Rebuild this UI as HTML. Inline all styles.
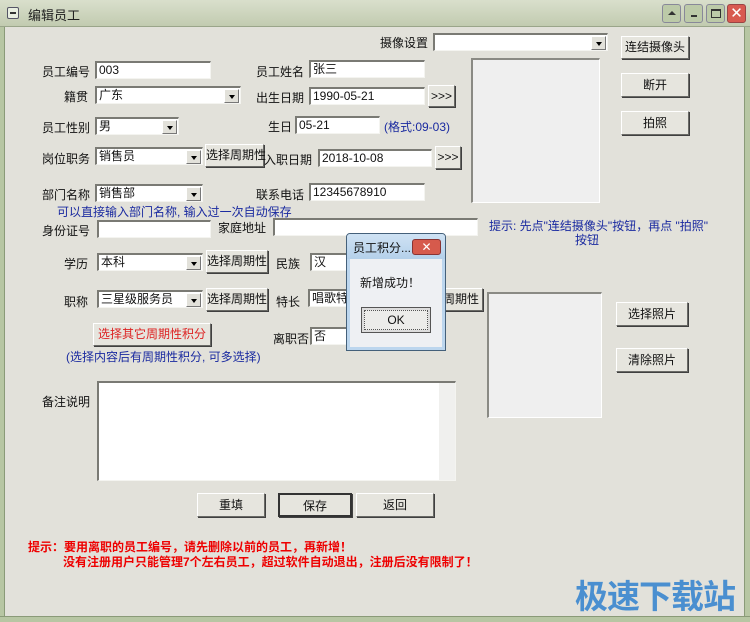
<!DOCTYPE html>
<html><head><meta charset="utf-8"><style>
*{margin:0;padding:0;box-sizing:border-box}
body{width:750px;height:622px;position:relative;overflow:hidden;background:#e2e1da;font-family:"Liberation Sans","Noto Sans CJK SC","WenQuanYi Zen Hei",sans-serif;font-size:12px;color:#111}
.a{position:absolute;white-space:nowrap}
.in{position:absolute;background:#fff;border-top:2px solid #7a7a74;border-left:2px solid #7a7a74;border-right:1px solid #f4f4f0;border-bottom:1px solid #f4f4f0;font-size:12px;line-height:14px;padding-left:2px;white-space:nowrap;overflow:hidden}
.dd{position:absolute;right:1px;top:1px;width:15px;height:14px;background:#e2e1da;border:1px solid;border-color:#fff #777 #777 #fff}
.dd:after{content:"";position:absolute;left:4px;top:5px;border:3px solid transparent;border-top:4px solid #000}
.b{position:absolute;background:#e6e5de;border:1px solid;border-color:#fff #6a6a66 #6a6a66 #fff;box-shadow:1px 1px 0 #404040;text-align:center;font-size:12px;white-space:nowrap}
.blue{color:#1a2aa0}
.red{color:#e00;font-weight:bold}
</style></head><body>
<!-- frame -->
<div class="a" style="left:0;top:0;width:750px;height:27px;background:linear-gradient(#d9dfcc,#c2cbb0);border-bottom:1px solid #9aa58a"></div>
<div class="a" style="left:0;top:27px;width:5px;height:595px;background:#b7c6a3;border-right:1px solid #8a9a78"></div>
<div class="a" style="left:744px;top:27px;width:6px;height:595px;background:#b7c6a3;border-left:1px solid #8a9a78"></div>
<div class="a" style="left:0;top:616px;width:750px;height:6px;background:#b7c6a3;border-top:1px solid #8a9a78"></div>
<div class="a" style="left:7px;top:7px;width:12px;height:12px;border:1px solid #556;background:#e8eee0;border-radius:2px"><div style="margin:4px 2px;height:2px;background:#333"></div></div>
<div class="a" style="left:28px;top:5px;font-size:13px;color:#222">编辑员工</div>
<div class="a" style="left:662px;top:4px;width:19px;height:19px;border-radius:3px;background:#bccaa8;border:1px solid #889">
<div style="margin:6px 5px;border:4px solid transparent;border-bottom:4px solid #333;width:0;height:0;margin-top:2px"></div></div>
<div class="a" style="left:684px;top:4px;width:19px;height:19px;border-radius:3px;background:#bccaa8;border:1px solid #889"><div style="margin:10px 6px 0;width:6px;height:2px;background:#333"></div></div>
<div class="a" style="left:706px;top:4px;width:19px;height:19px;border-radius:3px;background:#bccaa8;border:1px solid #889"><div style="margin:4px;width:10px;height:9px;border:1px solid #333;border-top-width:2px"></div></div>
<div class="a" style="left:727px;top:4px;width:19px;height:19px;border-radius:3px;background:#d85a50;border:1px solid #944;color:#fff;font-size:15px;line-height:17px;text-align:center">✕</div>

<!-- camera -->
<div class="a" style="left:380px;top:34px">摄像设置</div>
<div class="in" style="left:433px;top:33px;width:175px;height:18px"><div class="dd"></div></div>
<div class="b" style="left:621px;top:36px;width:68px;height:23px;line-height:21px">连结摄像头</div>
<div class="b" style="left:621px;top:73px;width:68px;height:24px;line-height:22px">断开</div>
<div class="b" style="left:621px;top:111px;width:68px;height:24px;line-height:22px">拍照</div>
<div class="a" style="left:471px;top:58px;width:129px;height:145px;background:#efefef;border-top:2px solid #8a8a84;border-left:2px solid #8a8a84;border-right:1px solid #fff;border-bottom:1px solid #fff"></div>

<div class="a" style="left:42px;top:63px">员工编号</div>
<div class="in" style="left:95px;top:61px;width:116px;height:18px">003</div>
<div class="a" style="left:256px;top:63px">员工姓名</div>
<div class="in" style="left:309px;top:60px;width:116px;height:18px">张三</div>

<div class="a" style="left:64px;top:88px">籍贯</div>
<div class="in" style="left:95px;top:86px;width:146px;height:18px">广东<div class="dd"></div></div>
<div class="a" style="left:256px;top:89px">出生日期</div>
<div class="in" style="left:309px;top:87px;width:116px;height:18px">1990-05-21</div>
<div class="b" style="left:428px;top:85px;width:27px;height:22px;line-height:20px">&gt;&gt;&gt;</div>

<div class="a" style="left:42px;top:119px">员工性别</div>
<div class="in" style="left:95px;top:117px;width:84px;height:18px">男<div class="dd"></div></div>
<div class="a" style="left:268px;top:118px">生日</div>
<div class="in" style="left:295px;top:116px;width:85px;height:18px">05-21</div>
<div class="a blue" style="left:384px;top:118px">(格式:09-03)</div>

<div class="a" style="left:42px;top:150px">岗位职务</div>
<div class="in" style="left:95px;top:147px;width:108px;height:18px">销售员<div class="dd"></div></div>
<div class="b" style="left:205px;top:144px;width:59px;height:23px;line-height:21px">选择周期性</div>
<div class="a" style="left:264px;top:151px">入职日期</div>
<div class="in" style="left:318px;top:149px;width:114px;height:18px">2018-10-08</div>
<div class="b" style="left:435px;top:146px;width:26px;height:23px;line-height:21px">&gt;&gt;&gt;</div>

<div class="a" style="left:42px;top:186px">部门名称</div>
<div class="in" style="left:95px;top:184px;width:108px;height:18px">销售部<div class="dd"></div></div>
<div class="a" style="left:256px;top:186px">联系电话</div>
<div class="in" style="left:309px;top:183px;width:116px;height:18px">12345678910</div>
<div class="a blue" style="left:57px;top:203px">可以直接输入部门名称, 输入过一次自动保存</div>

<div class="a" style="left:42px;top:222px">身份证号</div>
<div class="in" style="left:97px;top:220px;width:114px;height:18px"></div>
<div class="a" style="left:218px;top:219px">家庭地址</div>
<div class="in" style="left:273px;top:218px;width:205px;height:18px"></div>
<div class="a blue" style="left:489px;top:217px">提示: 先点"连结摄像头"按钮，再点 "拍照"</div>
<div class="a blue" style="left:575px;top:231px">按钮</div>

<div class="a" style="left:64px;top:255px">学历</div>
<div class="in" style="left:97px;top:253px;width:106px;height:18px">本科<div class="dd"></div></div>
<div class="b" style="left:206px;top:250px;width:62px;height:23px;line-height:21px">选择周期性</div>
<div class="a" style="left:276px;top:255px">民族</div>
<div class="in" style="left:310px;top:253px;width:60px;height:18px">汉</div>

<div class="a" style="left:64px;top:293px">职称</div>
<div class="in" style="left:97px;top:290px;width:106px;height:18px">三星级服务员<div class="dd"></div></div>
<div class="b" style="left:206px;top:288px;width:62px;height:23px;line-height:21px">选择周期性</div>
<div class="a" style="left:276px;top:293px">特长</div>
<div class="in" style="left:308px;top:289px;width:60px;height:18px">唱歌特</div>
<div class="b" style="left:440px;top:288px;width:43px;height:23px;line-height:21px;text-align:right;padding-right:3px">周期性</div>

<div class="b" style="left:93px;top:323px;width:118px;height:23px;line-height:21px;color:#d22">选择其它周期性积分</div>
<div class="a blue" style="left:66px;top:348px">(选择内容后有周期性积分, 可多选择)</div>
<div class="a" style="left:273px;top:330px">离职否</div>
<div class="in" style="left:310px;top:327px;width:60px;height:18px">否</div>

<div class="a" style="left:487px;top:292px;width:115px;height:126px;background:#efefef;border-top:2px solid #8a8a84;border-left:2px solid #8a8a84;border-right:1px solid #fff;border-bottom:1px solid #fff"></div>
<div class="b" style="left:616px;top:302px;width:72px;height:24px;line-height:22px">选择照片</div>
<div class="b" style="left:616px;top:348px;width:72px;height:24px;line-height:22px">清除照片</div>

<div class="a" style="left:42px;top:393px">备注说明</div>
<div class="in" style="left:97px;top:381px;width:359px;height:100px"><div style="position:absolute;right:0;top:0;width:16px;height:100%;background:#f0f0ee"></div></div>

<div class="b" style="left:197px;top:493px;width:68px;height:24px;line-height:22px">重填</div>
<div class="b" style="left:278px;top:493px;width:74px;height:24px;line-height:22px;border:2px solid #333">保存</div>
<div class="b" style="left:356px;top:493px;width:78px;height:24px;line-height:22px">返回</div>

<div class="a red" style="left:28px;top:538px">提示：要用离职的员工编号，请先删除以前的员工，再新增！</div>
<div class="a red" style="left:63px;top:553px">没有注册用户只能管理7个左右员工，超过软件自动退出，注册后没有限制了！</div>

<div class="a" style="left:575px;top:570px;font-size:33px;font-weight:bold;color:#4a8fd0;letter-spacing:-1px">极速下载站</div>

<!-- dialog -->
<div class="a" style="left:346px;top:233px;width:100px;height:118px;background:#eef0f3;border:1px solid #44607a;border-radius:4px 4px 0 0;box-shadow:inset 0 0 0 3px #bcd6ee">
<div style="position:absolute;left:0;top:0;width:98px;height:25px;background:linear-gradient(#cfe2f4,#b4d0ea);border-radius:3px 3px 0 0"></div>
<div style="position:absolute;left:6px;top:5px;font-size:12px;color:#111">员工积分...</div>
<div style="position:absolute;left:65px;top:5px;width:29px;height:16px;background:#d65a4c;border:1px solid #833;border-radius:3px;color:#fff;text-align:center;line-height:14px;font-size:12px">✕</div>
<div style="position:absolute;left:13px;top:40px;font-size:12px">新增成功！</div>
<div style="position:absolute;left:14px;top:73px;width:70px;height:26px;background:#ececea;border:1px solid #555;box-shadow:inset 0 0 0 2px #ddd;outline:1px dotted #555;outline-offset:-4px;text-align:center;line-height:24px">OK</div>
</div>
</body></html>
